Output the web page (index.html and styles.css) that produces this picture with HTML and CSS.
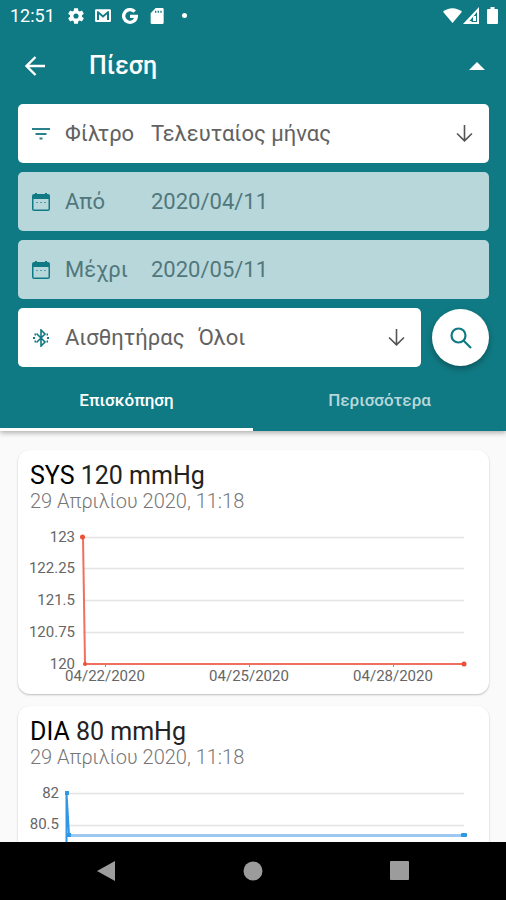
FILE: index.html
```html
<!DOCTYPE html>
<html lang="el">
<head>
  <meta charset="UTF-8">
  <meta name="viewport" content="width=device-width, initial-scale=1">
  <title>Πίεση</title>
  <link rel="stylesheet" href="styles.css">
</head>
<body>

<header class="header">
  <div class="status-bar">
    <span class="clock">12:51</span>
    <svg class="status-icon" viewBox="2 2 20 20"><path d="M19.4 13c.1-.3.1-.7.1-1s0-.7-.1-1l2.4-1.8-2.3-4-2.8 1.1c-.6-.4-1.2-.8-1.8-1L14.4 2.200H9.600l-.4 3.100c-.7.2-1.300.6-1.800 1L4.600 5.200l-2.400 4L4.600 11c-.1.3-.1.7-.1 1s0 .7.1 1l-2.400 1.800 2.400 4 2.800-1.100c.5.4 1.100.8 1.800 1l.4 3.100h4.800l.4-3.100c.7-.2 1.300-.6 1.800-1l2.800 1.100 2.400-4zM12 15.200a3.200 3.200 0 1 1 0-6.400 3.200 3.200 0 0 1 0 6.400z"/></svg>
    <svg class="status-icon" viewBox="0 0 24 24"><path d="M2 2h20a2 2 0 0 1 2 2v15a2 2 0 0 1-2 2H2a2 2 0 0 1-2-2V4a2 2 0 0 1 2-2zm1 3v13h3V9.500l6 5 6-5V18h3V5h-2l-7 6-7-6z" fill-rule="evenodd"/></svg>
    <svg class="status-icon" viewBox="0 0 24 24"><path d="M19 5.500A9.500 9.500 0 1 0 21.500 12.500H12" fill="none" stroke="#fff" stroke-width="5"/></svg>
    <svg class="status-icon" viewBox="0 0 24 24"><path fill-rule="evenodd" d="M20 0H10L2.500 8v14a2 2 0 0 0 2 2H20a2 2 0 0 0 2-2V2a2 2 0 0 0-2-2zM9 4h2v3H9zm4 0h2v3h-2zm4 0h2v3h-2z"/></svg>
    <span class="dot"></span>
    <span class="spacer"></span>
    <svg class="wifi" viewBox="0 0 20 17"><path d="M10 16.500L0 4.500C5.500-.5 14.500-.5 20 4.500z"/></svg>
    <svg class="signal" viewBox="0 0 16 17"><path fill-rule="evenodd" d="M16 0v17H0zM14 5L6.500 14H8.500v1H14zM10 9h3v5h-3z"/></svg>
    <svg class="battery" viewBox="0 0 11 17"><path d="M3.500 0h4v2H10a1 1 0 0 1 1 1v13a1 1 0 0 1-1 1H1a1 1 0 0 1-1-1V3a1 1 0 0 1 1-1h2.500z"/></svg>
  </div>

  <div class="app-bar">
    <button class="icon-btn" aria-label="Πίσω">
      <svg width="20" height="20" viewBox="0 0 20 20" fill="none" stroke="#fff" stroke-width="2.400"><path d="M20 10H2M10.500 1L1.500 10l9 9"/></svg>
    </button>
    <h1>Πίεση</h1>
    <button class="icon-btn" aria-label="Σύμπτυξη">
      <svg width="16" height="8" viewBox="0 0 16 8" fill="#fff"><path d="M8 0l8 8H0z"/></svg>
    </button>
  </div>

  <form class="filters">
    <div class="field">
      <svg class="field-icon" viewBox="0 0 18 18" fill="none" stroke="#2b818b" stroke-width="1.800"><path d="M0 4h18M3.500 9h11M7.500 13.500h3"/></svg>
      <label for="filter">Φίλτρο</label>
      <select id="filter"><option>Τελευταίος μήνας</option></select>
      <svg class="arrow" viewBox="0 0 16 16"><path d="M8 0v15M1 8l7 7 7-7"/></svg>
    </div>
    <div class="field disabled">
      <svg class="field-icon" viewBox="0 0 18 18"><path fill-rule="evenodd" fill="#107a84" d="M3 0h2v1h8V0h2v1h1a2 2 0 0 1 2 2v13a2 2 0 0 1-2 2H2a2 2 0 0 1-2-2V3a2 2 0 0 1 2-2h1zM1.500 6v10.500h15V6z"/><path stroke="#107a84" stroke-opacity=".6" stroke-dasharray="2 2" d="M4 9.500h10"/></svg>
      <label for="from">Από</label>
      <input type="text" id="from" value="2020/04/11" disabled>
    </div>
    <div class="field disabled">
      <svg class="field-icon" viewBox="0 0 18 18"><path fill-rule="evenodd" fill="#107a84" d="M3 0h2v1h8V0h2v1h1a2 2 0 0 1 2 2v13a2 2 0 0 1-2 2H2a2 2 0 0 1-2-2V3a2 2 0 0 1 2-2h1zM1.500 6v10.500h15V6z"/><path stroke="#107a84" stroke-opacity=".6" stroke-dasharray="2 2" d="M4 9.500h10"/></svg>
      <label for="to">Μέχρι</label>
      <input type="text" id="to" value="2020/05/11" disabled>
    </div>
    <div class="filter-row">
      <div class="field">
        <svg class="field-icon" viewBox="0 0 18 18" fill="none" stroke="#107a84" stroke-width="1.600"><path d="M4.500 4.500l8.500 8.500-4 4V1l4 4-8.500 8.500"/><path stroke-width="2" d="M1 9h2M15 9h2M2.500 5.500h1.500M2.500 12.500h1.500M14.500 5.500h1.500M14.500 12.500h1.500"/></svg>
        <label for="sensor">Αισθητήρας</label>
        <select id="sensor"><option>Όλοι</option></select>
        <svg class="arrow" viewBox="0 0 16 16"><path d="M8 0v15M1 8l7 7 7-7"/></svg>
      </div>
      <button type="button" class="search-btn" aria-label="Αναζήτηση">
        <svg width="22" height="22" viewBox="0 0 22 22" fill="none" stroke="#107a84" stroke-width="2.200"><circle cx="8.500" cy="8.500" r="7"/><path d="M13.500 13.500l7.500 7.500"/></svg>
      </button>
    </div>
  </form>

  <nav class="tabs">
    <a href="#overview" class="active">Επισκόπηση</a>
    <a href="#more">Περισσότερα</a>
  </nav>
</header>

<main class="content" id="overview">
  <section class="card">
    <h2><b>SYS</b> 120 mmHg</h2>
    <p>29 Απριλίου 2020, 11:18</p>
    <svg class="chart" viewBox="0 0 447 172">
      <path class="grid" d="M53 25.500H434M53 56.500H434M53 88.500H434M53 120.500H434"/>
      <g class="y-labels">
        <text x="45" y="30">123</text>
        <text x="45" y="61">122.25</text>
        <text x="45" y="93">121.5</text>
        <text x="45" y="125">120.75</text>
        <text x="45" y="157">120</text>
      </g>
      <g class="x-labels">
        <text x="75" y="169">04/22/2020</text>
        <text x="219" y="169">04/25/2020</text>
        <text x="363" y="169">04/28/2020</text>
      </g>
      <path class="line-red" d="M53 25L55 152H434"/>
      <path stroke="#f0705f" d="M75.500 152v3M219.500 152v3M363.500 152v3"/>
      <g fill="#ee4f37">
        <circle cx="52.500" cy="25" r="2.500"/>
        <circle cx="55" cy="152" r="2"/>
        <circle cx="434" cy="152" r="2.500"/>
      </g>
    </svg>
  </section>

  <section class="card">
    <h2><b>DIA</b> 80 mmHg</h2>
    <p>29 Απριλίου 2020, 11:18</p>
    <svg class="chart" viewBox="0 0 447 172">
      <path class="grid" d="M37 25.500H434M37 57.500H434"/>
      <g class="y-labels">
        <text x="29" y="30">82</text>
        <text x="29" y="61">80.5</text>
      </g>
      <path class="line-blue-light" d="M39 67.500H434"/>
      <path class="line-blue" d="M36.500 152V25L39 67"/>
      <g fill="#2f98e4">
        <rect x="35" y="23" width="4" height="4"/>
        <rect x="37" y="65" width="4" height="4"/>
        <rect x="431" y="65" width="6" height="4" rx="1"/>
      </g>
    </svg>
  </section>
</main>

<footer class="nav-bar">
  <button aria-label="Πίσω"><svg width="20" height="22" viewBox="0 0 20 22"><path d="M19 1v20L1 11z"/></svg></button>
  <button aria-label="Αρχική"><svg width="20" height="20" viewBox="0 0 20 20"><circle cx="10" cy="10" r="9.500"/></svg></button>
  <button aria-label="Πρόσφατα"><svg width="20" height="20" viewBox="0 0 20 20"><rect width="19" height="19" rx="1"/></svg></button>
</footer>

</body>
</html>
```
FILE: styles.css
```css
body {
  margin: 0;
  font-family: Roboto, sans-serif;
  background-color: #fafafa;
  display: flex;
  flex-direction: column;
  height: 100vh;
}
button {
  display: flex;
  align-items: center;
  justify-content: center;
  border: none;
  background: none;
  padding: 0;
  cursor: pointer;
}
.header {
  position: relative;
  flex-shrink: 0;
  background-color: #107a84;
  color: white;
  box-shadow: 0 2px 5px rgba(0, 0, 0, 0.3);
}

/* status bar */
.status-bar {
  display: flex;
  align-items: center;
  height: 31px;
  padding: 0 8px 0 10px;
  fill: white;
}
.clock {
  font-size: 18px;
  margin-right: 13px;
}
.status-icon {
  width: 16px;
  height: 16px;
  margin-right: 11px;
}
.dot {
  width: 5px;
  height: 5px;
  margin-left: 6px;
  border-radius: 50%;
  background-color: white;
}
.spacer {
  flex: 1;
}
.wifi {
  width: 19px;
  height: 17px;
}
.signal {
  width: 16px;
  height: 17px;
  margin: 0 8px 0 1px;
}
.battery {
  width: 11px;
  height: 17px;
}

/* title */
.app-bar {
  display: flex;
  align-items: center;
  height: 69px;
  padding: 0 21px 0 25px;
}
.app-bar h1 {
  flex: 1;
  margin: 0 0 0 44px;
  font-size: 25px;
  font-weight: 500;
}

/* filters */
.filters {
  display: flex;
  flex-direction: column;
  gap: 9px;
  padding: 4px 17px 0 18px;
}
.field {
  display: flex;
  flex: 1;
  align-items: center;
  box-sizing: border-box;
  height: 59px;
  padding: 0 16px 0 14px;
  border-radius: 5px;
  background-color: white;
  color: #626262;
  font-size: 22px;
}
.filters > .field {
  flex: none;
}
.field.disabled {
  background-color: #b7d7db;
  color: #52777b;
}
.field-icon {
  width: 18px;
  height: 18px;
  margin-right: 15px;
}
.field label {
  min-width: 72px;
  margin-right: 14px;
}
.field input,
.field select {
  flex: 1;
  min-width: 0;
  padding: 0;
  border: none;
  outline: none;
  appearance: none;
  background: none;
  color: inherit;
  font: inherit;
}
.arrow {
  width: 17px;
  height: 17px;
  fill: none;
  stroke: #555;
  stroke-width: 1.5;
}
.filter-row {
  display: flex;
  align-items: center;
  gap: 11px;
}
.search-btn {
  width: 57px;
  height: 57px;
  border-radius: 50%;
  background-color: white;
  box-shadow: 0 3px 6px rgba(0, 0, 0, 0.3);
}

/* tabs */
.tabs {
  display: flex;
}
.tabs a {
  flex: 1;
  height: 61px;
  line-height: 66px;
  border-bottom: 3px solid transparent;
  text-align: center;
  text-decoration: none;
  color: #b7d7db;
  font-size: 17px;
  font-weight: 500;
}
.tabs a.active {
  color: white;
  border-bottom-color: white;
}

/* cards */
.content {
  flex: 1;
  min-height: 0;
  overflow: hidden;
  padding: 19px 17px 0 18px;
}
.card {
  margin-bottom: 12px;
  padding: 12px 12px 10px;
  border-radius: 12px;
  background-color: white;
  box-shadow: 0 1px 2px rgba(0, 0, 0, 0.25);
}
.card h2 {
  margin: 0;
  font-size: 25px;
  line-height: 28px;
  font-weight: 400;
  color: #222;
}
.card h2 b {
  font-weight: 400;
  color: black;
}
.card p {
  margin: 0;
  font-size: 20px;
  line-height: 22px;
  font-weight: 300;
  color: #777;
}
.chart {
  display: block;
  width: 100%;
  fill: none;
}
.chart text {
  fill: #666;
  font-size: 15px;
}
.y-labels {
  text-anchor: end;
}
.x-labels {
  text-anchor: middle;
}
.grid {
  stroke: #e4e4e4;
  stroke-width: 1.5;
}
.line-red {
  stroke: #f0705f;
  stroke-width: 2;
}
.line-blue {
  stroke: #2f98e4;
  stroke-width: 2;
}
.line-blue-light {
  stroke: #9cc8f2;
  stroke-width: 3;
}

/* system navigation */
.nav-bar {
  display: flex;
  flex-shrink: 0;
  height: 58px;
  padding: 0 33px;
  background-color: black;
  fill: #9c9c9c;
}
.nav-bar button {
  flex: 1;
}
```
